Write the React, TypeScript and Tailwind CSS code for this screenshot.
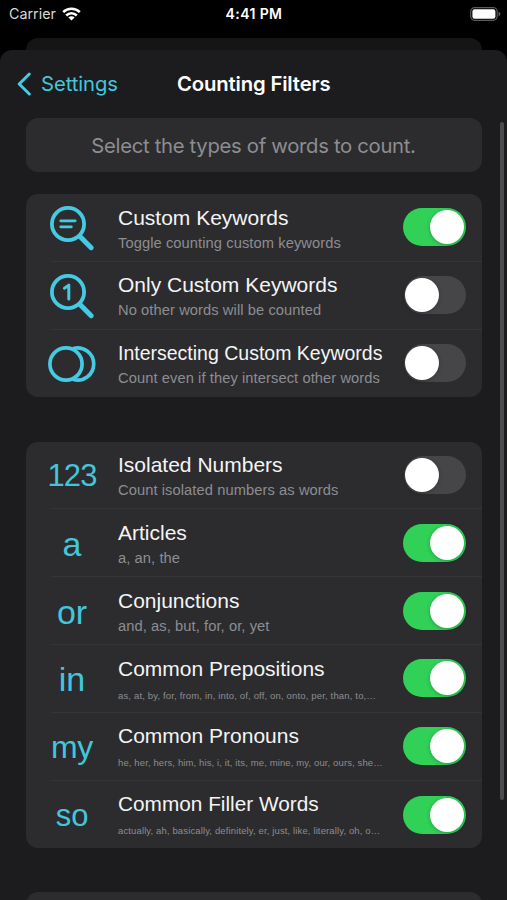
import type { ReactNode } from "react";

type RowData = {
  icon: ReactNode;
  title: string;
  titleClass?: string;
  sub: string;
  subClass?: string;
  on: boolean;
};

function Magnifier({ children }: { children: ReactNode }) {
  return (
    <svg className="max-w-none shrink-0" width="48" height="48" viewBox="0 0 48 48" fill="none" stroke="#44cae3" strokeLinecap="round">
      <circle cx="20" cy="20" r="16.1" strokeWidth="3.8" />
      <path d="M32 32.4 L43.2 43.7" strokeWidth="5" />
      {children}
    </svg>
  );
}

function Circles() {
  return (
    <svg className="max-w-none shrink-0" width="48" height="40" viewBox="0 0 48 40" fill="none" stroke="#44cae3" strokeWidth="3.7">
      <circle cx="18" cy="20" r="16.1" />
      <path d="M24.8 35.36 A16.1 16.1 0 1 0 24.8 4.64" />
    </svg>
  );
}

const filters: RowData[] = [
  {
    icon: (
      <Magnifier>
        <path d="M12.7 16.8 H27.2 M12.7 22.8 H23.4" strokeWidth="2.7" />
      </Magnifier>
    ),
    title: "Custom Keywords",
    sub: "Toggle counting custom keywords",
    on: true,
  },
  {
    icon: (
      <Magnifier>
        <path d="M16.4 16.2 L20.8 13.2 V27" strokeWidth="3" strokeLinejoin="round" />
      </Magnifier>
    ),
    title: "Only Custom Keywords",
    sub: "No other words will be counted",
    on: false,
  },
  {
    icon: <Circles />,
    title: "Intersecting Custom Keywords",
    titleClass: "text-[19.5px]",
    sub: "Count even if they intersect other words",
    on: false,
  },
];

const wordTypes: RowData[] = [
  {
    icon: <span className="pt-px text-[31px] tracking-[-0.9px]">123</span>,
    title: "Isolated Numbers",
    sub: "Count isolated numbers as words",
    on: false,
  },
  { icon: <span className="pt-[2px] text-[34px]">a</span>, title: "Articles", sub: "a, an, the", on: true },
  {
    icon: <span className="pt-[2px] text-[34px]">or</span>,
    title: "Conjunctions",
    sub: "and, as, but, for, or, yet",
    on: true,
  },
  {
    icon: <span className="pt-px text-[34px]">in</span>,
    title: "Common Prepositions",
    sub: "as, at, by, for, from, in, into, of, off, on, onto, per, than, to,…",
    subClass: "text-[9.5px] tracking-[0.16px] pt-[2px]",
    on: true,
  },
  {
    icon: <span className="pt-px text-[32px] tracking-[-0.4px]">my</span>,
    title: "Common Pronouns",
    sub: "he, her, hers, him, his, i, it, its, me, mine, my, our, ours, she…",
    subClass: "text-[9.5px] tracking-[0.12px] pt-[2px]",
    on: true,
  },
  {
    icon: <span className="pt-[2px] text-[31px]">so</span>,
    title: "Common Filler Words",
    titleClass: "text-[20.8px]",
    sub: "actually, ah, basically, definitely, er, just, like, literally, oh, o…",
    subClass: "text-[9.5px] tracking-[0.13px] pt-[2px]",
    on: true,
  },
];

function Toggle({ on }: { on: boolean }) {
  return (
    <div
      className={
        on
          ? "flex h-[38px] w-[62.5px] shrink-0 items-center justify-end rounded-full bg-[#31d158] pr-[2px]"
          : "flex h-[38px] w-[61.5px] shrink-0 items-center rounded-full bg-[#464649] pl-[0.5px]"
      }
    >
      <div className="size-[34px] rounded-full bg-white shadow-[0_1px_4px_rgba(0,0,0,0.25)]" />
    </div>
  );
}

function Row({ row, last }: { row: RowData; last: boolean }) {
  return (
    <div className="flex h-[67.8px] pl-[25px]">
      <div className={last ? "flex grow" : "flex grow border-b border-[#353537]"}>
        <div className="flex w-[43px] shrink-0 items-center justify-center pt-px leading-[38px] text-[#42c6dc]">
          {row.icon}
        </div>
        <div className="ml-[24.5px] w-[269px] pt-[11.5px] whitespace-nowrap">
          <div className={`h-6 leading-6 text-[#f4f4f5] ${row.titleClass ?? "text-[21px]"}`}>{row.title}</div>
          <div className={`mt-[4px] h-5 leading-[18px] text-[#8d8d92] ${row.subClass ?? "text-[14.7px] tracking-[0.08px]"}`}>
            {row.sub}
          </div>
        </div>
        <div className="flex grow items-center justify-end pr-[16px]">
          <Toggle on={row.on} />
        </div>
      </div>
    </div>
  );
}

function Card({ rows }: { rows: RowData[] }) {
  return (
    <section className="overflow-hidden rounded-[12px] bg-[#2c2c2e] font-['Liberation_Sans',Arial,sans-serif]">
      {rows.map((r, i) => (
        <Row key={r.title} row={r} last={i === rows.length - 1} />
      ))}
    </section>
  );
}

export default function App() {
  return (
    <div className="flex h-[900px] w-[507px] flex-col overflow-hidden bg-black font-[Inter,sans-serif] text-white">
      <header className="grid h-[38px] shrink-0 grid-cols-3 items-start pt-[3px] pr-[6px] pl-[9px]">
        <div className="flex h-[21px] items-center gap-[6px] text-[14.3px] text-[#d8d8d8]">
          Carrier
          <svg width="19" height="14" viewBox="0 0 19 14" fill="none" stroke="#fff" strokeWidth="2.5">
            <path d="M1.2 5.2 A11.8 11.8 0 0 1 17.8 5.2" />
            <path d="M4.2 8.5 A7.5 7.5 0 0 1 14.8 8.5" />
            <path d="M9.5 13.6 L6.4 10.6 A4.4 4.4 0 0 1 12.6 10.6 Z" fill="#fff" stroke="none" />
          </svg>
        </div>
        <div className="-ml-[2px] text-center text-[14px] leading-[22px] font-semibold tracking-[0.4px]">4:41 PM</div>
        <div className="flex h-[21px] items-center justify-end">
          <svg width="31" height="14" viewBox="0 0 31 14">
            <rect x="0.7" y="0.7" width="26.5" height="12.6" rx="4" fill="none" stroke="#5c5c5c" strokeWidth="1.2" />
            <rect x="2.4" y="2.2" width="23" height="9.6" rx="2.2" fill="#fff" />
            <path d="M28.6 4.8 Q30.4 5.6 30.4 7 T28.6 9.2 Z" fill="#6a6a6a" />
          </svg>
        </div>
      </header>
      <div className="mx-[25.5px] h-3 shrink-0 rounded-t-[12px] bg-[#151516]" />
      <main className="relative flex grow flex-col overflow-hidden rounded-t-[12px] bg-[#1c1c1e] px-[25.5px]">
        <nav className="-ml-[9px] flex h-[68px] shrink-0 items-center">
          <div className="flex w-[160.5px] items-center gap-[10.5px] text-[20.3px] tracking-[-0.1px] text-[#42c6dc]">
            <svg width="14" height="24" viewBox="0 0 14 24" fill="none" stroke="#44cae3" strokeWidth="3" strokeLinecap="round" strokeLinejoin="round">
              <path d="M12.3 2 L2.2 12 L12.3 22" />
            </svg>
            Settings
          </div>
          <h1 className="text-[20.3px] font-semibold tracking-[-0.15px] whitespace-nowrap">Counting Filters</h1>
        </nav>
        <div className="flex h-[54px] shrink-0 items-center justify-center rounded-[12px] bg-[#2c2c2e] pt-[2px] text-[20.3px] tracking-[-0.31px] whitespace-nowrap text-[#8d8d92]">
          Select the types of words to count.
        </div>
        <div className="mt-[22px] shrink-0">
          <Card rows={filters} />
        </div>
        <div className="mt-[44.3px] shrink-0">
          <Card rows={wordTypes} />
        </div>
        <div className="mt-[44px] h-10 shrink-0 rounded-[12px] bg-[#2c2c2e]" />
        <div className="absolute top-[72px] right-[3.5px] h-[678px] w-1 rounded-full bg-[#4b4b4d]" />
      </main>
    </div>
  );
}
